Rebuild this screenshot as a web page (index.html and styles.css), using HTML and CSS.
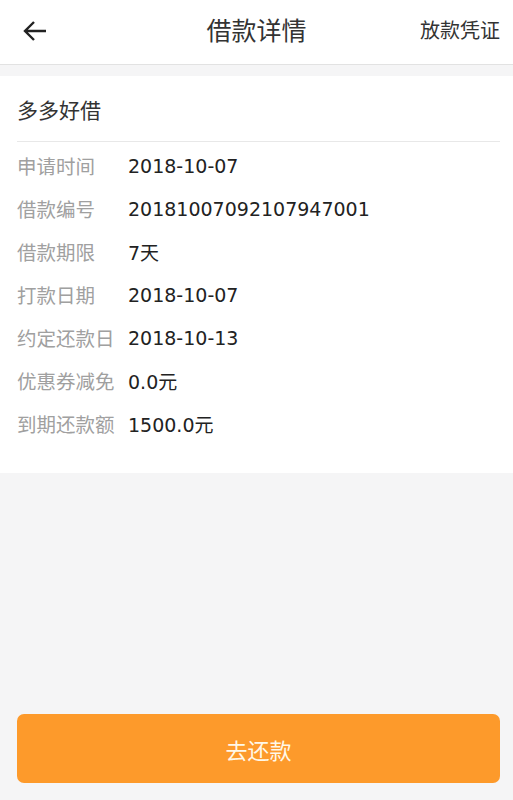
FILE: index.html
```html
<!DOCTYPE html>
<html lang="zh-CN">

<head>
    <meta charset="UTF-8">
    <meta name="viewport" content="width=device-width, initial-scale=1.0">
    <title>借款详情</title>
    <link rel="stylesheet" href="styles.css">
</head>

<body>
    <!-- Top bar -->
    <div class="header">
        <span class="back">
            <svg width="24" height="20" viewBox="0 0 24 20">
                <path d="M23 10H2M11 1L2 10l9 9" fill="none" stroke="#222" stroke-width="2.4" />
            </svg>
        </span>
        <span class="title">借款详情</span>
        <span class="voucher">放款凭证</span>
    </div>

    <!-- Loan info card -->
    <div class="card">
        <div class="card-title">多多好借</div>
        <div class="rows">
            <div class="row"><span class="label">申请时间</span><span class="value">2018-10-07</span></div>
            <div class="row"><span class="label">借款编号</span><span class="value">20181007092107947001</span></div>
            <div class="row"><span class="label">借款期限</span><span class="value">7天</span></div>
            <div class="row"><span class="label">打款日期</span><span class="value">2018-10-07</span></div>
            <div class="row"><span class="label">约定还款日</span><span class="value">2018-10-13</span></div>
            <div class="row"><span class="label">优惠券减免</span><span class="value">0.0元</span></div>
            <div class="row"><span class="label">到期还款额</span><span class="value">1500.0元</span></div>
        </div>
    </div>

    <div class="footer">
        <button type="button" class="repay">去还款</button>
    </div>
</body>

</html>
```

FILE: styles.css
```css
html,
body {
    height: 100%;
}

body {
    margin: 0;
    font-family: "Noto Sans CJK SC", "Noto Sans", sans-serif;
    background-color: #f5f5f6;
    display: flex;
    flex-direction: column;
}

.header {
    height: 65px;
    box-sizing: border-box;
    background-color: #fff;
    border-bottom: 1px solid #e2e2e2;
    display: flex;
    align-items: center;
    justify-content: space-between;
    padding: 0 13px 6px 23px;
}

.back {
    width: 80px;
    display: flex;
    align-items: center;
    padding-top: 3px;
}

.title {
    font-size: 25px;
    color: #333;
}

.voucher {
    width: 90px;
    text-align: right;
    font-size: 20px;
    color: #333;
}

.card {
    margin-top: 11px;
    background-color: #fff;
    padding: 0 13px 0 17px;
    height: 397px;
}

.card-title {
    height: 65px;
    line-height: 67px;
    font-size: 21px;
    color: #333;
    border-bottom: 1px solid #e8e8e8;
}

.rows {
    padding-top: 2px;
}

.row {
    height: 43px;
    display: flex;
    align-items: center;
}

.label {
    width: 111px;
    font-size: 19.5px;
    color: #a0a0a0;
}

.value {
    font-family: "DejaVu Sans", "Noto Sans CJK SC", sans-serif;
    font-size: 19px;
    color: #222;
}

.footer {
    flex: 1;
    display: flex;
    align-items: flex-end;
    padding: 0 13px 17px 17px;
}

.repay {
    width: 100%;
    height: 69px;
    border: none;
    border-radius: 7px;
    background-color: #fd9a2b;
    color: #fff8e8;
    font-family: "Noto Sans CJK SC", sans-serif;
    font-size: 22px;
    cursor: pointer;
}
```
